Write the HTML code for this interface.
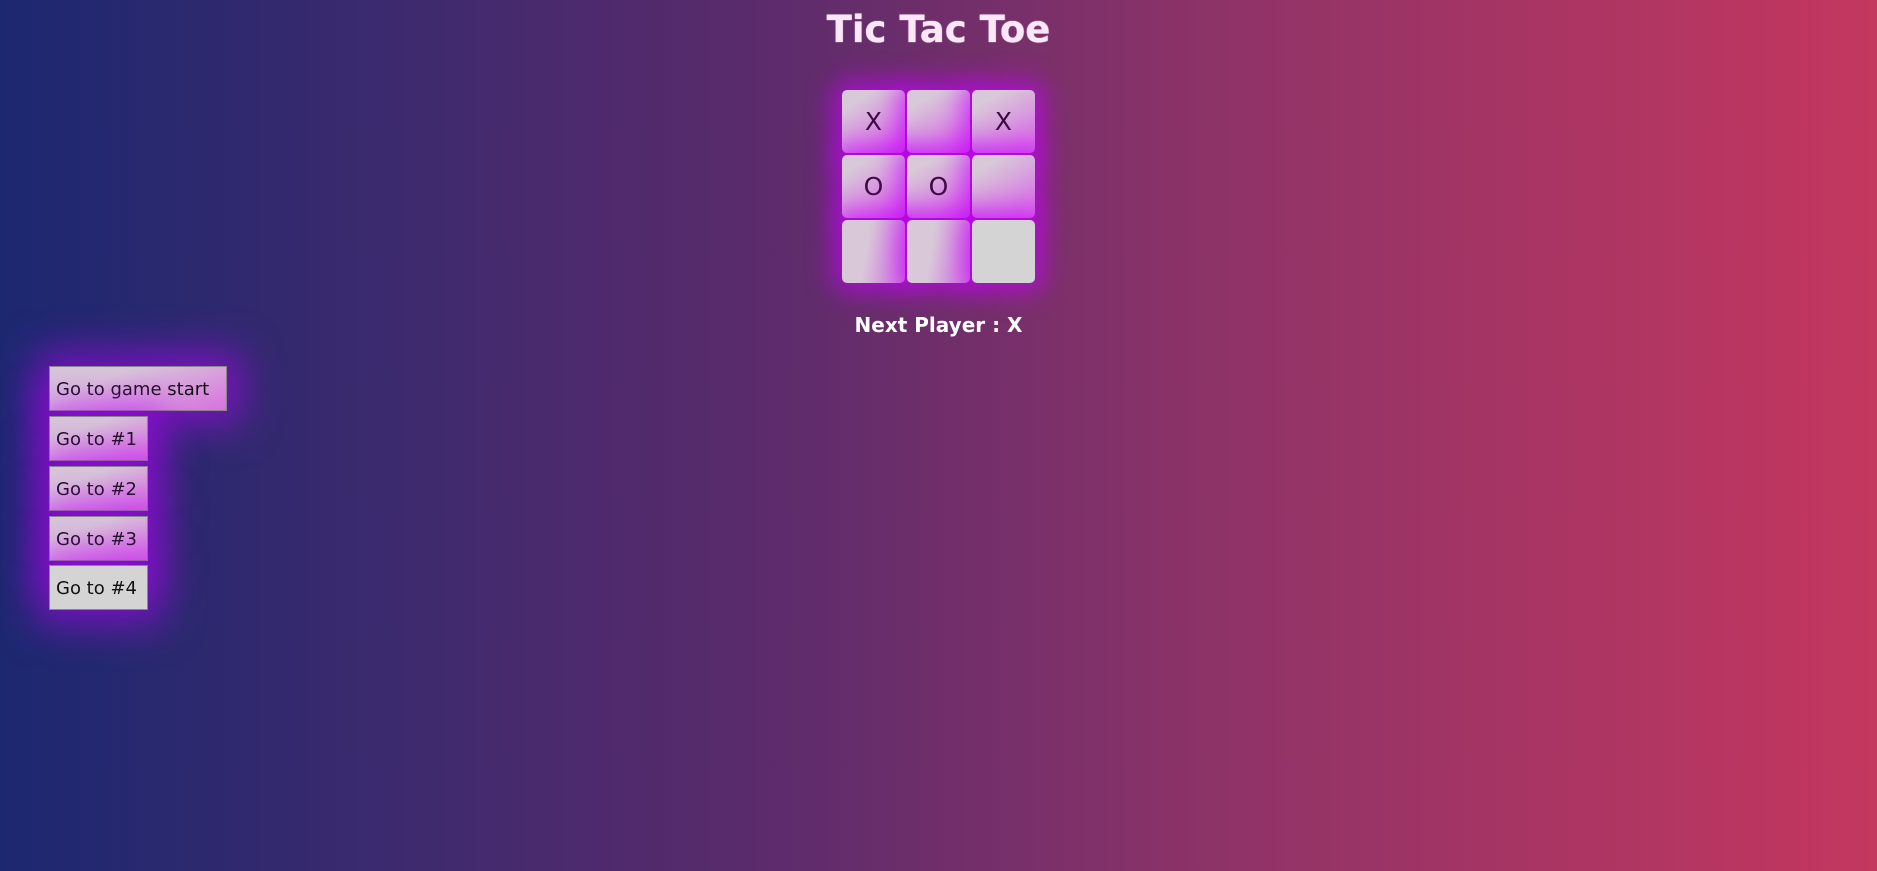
<!DOCTYPE html>
<html><head><style>
html,body{margin:0;width:1877px;height:871px;overflow:hidden}
body{background:linear-gradient(90deg,#1c2870 0%,#5a2b6c 40%,#8e3368 65%,#c4375f 100%);font-family:"DejaVu Sans","Liberation Sans",sans-serif;position:relative}
h1{position:absolute;top:8px;left:0;width:1877px;text-align:center;margin:0;font-size:37px;font-weight:bold;color:#fde6f8;text-shadow:0 0 1px #fff}
.c{position:absolute;width:63px;height:63px;border-radius:5px;background:#d4d4d4;box-shadow:0 0 26px 8px rgba(200,0,255,.7);display:flex;align-items:center;justify-content:center;font-size:25px;color:#3a0a40}
.g{background:linear-gradient(150deg,#d8c8d8 20%,#d860e8 100%)}
.np{position:absolute;top:313px;left:0;width:1877px;text-align:center;font-size:20px;font-weight:bold;color:#fff}
.b{position:absolute;left:49px;border:1px solid #888;background:#d4d4d4;font-size:18px;color:#111;line-height:46px;padding:0 6px;box-shadow:0 0 40px 14px rgba(190,0,255,.55);box-sizing:border-box;height:45px;white-space:nowrap;overflow:hidden}
.b.g{background:linear-gradient(160deg,#d8c8d8 30%,#d870e0 100%)}
</style></head><body>
<h1>Tic Tac Toe</h1>
<div class="c g" style="left:842px;top:90px">X</div>
<div class="c g" style="left:907px;top:90px"></div>
<div class="c g" style="left:972px;top:90px">X</div>
<div class="c g" style="left:842px;top:155px">O</div>
<div class="c g" style="left:907px;top:155px">O</div>
<div class="c g" style="left:972px;top:155px"></div>
<div class="c g" style="left:842px;top:220px;background:linear-gradient(100deg,#d8c8d8 40%,#d070e0 100%)"></div>
<div class="c g" style="left:907px;top:220px;background:linear-gradient(100deg,#d8c8d8 40%,#d070e0 100%)"></div>
<div class="c" style="left:972px;top:220px"></div>
<div class="np">Next Player : X</div>
<div class="b g" style="top:366px;width:178px">Go to game start</div>
<div class="b g" style="top:416px;width:99px">Go to #1</div>
<div class="b g" style="top:466px;width:99px">Go to #2</div>
<div class="b g" style="top:516px;width:99px">Go to #3</div>
<div class="b" style="top:565px;width:99px">Go to #4</div>
</body></html>
